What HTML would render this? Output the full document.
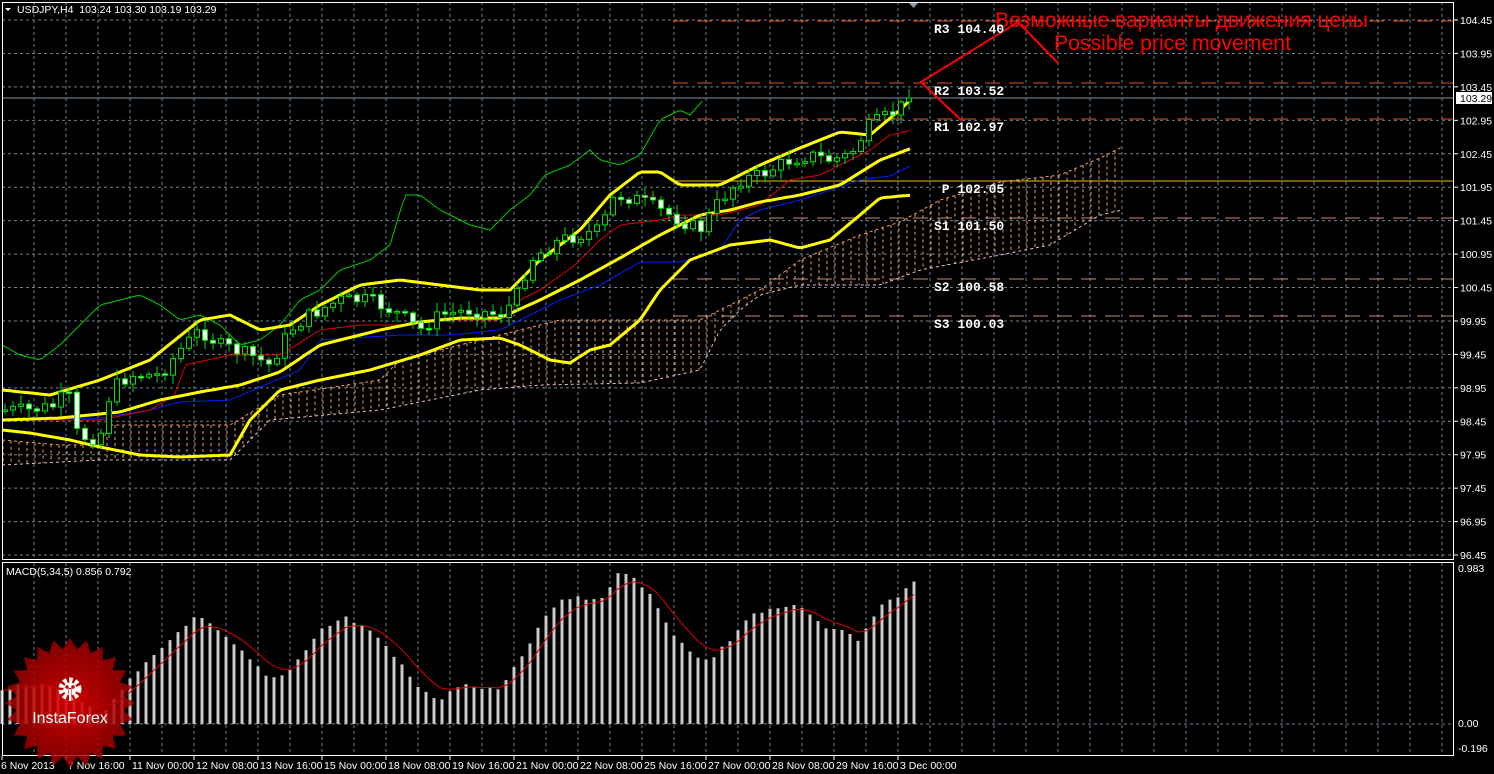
<!DOCTYPE html>
<html><head><meta charset="utf-8"><style>
html,body{margin:0;padding:0;background:#000;width:1494px;height:774px;overflow:hidden}
svg{display:block}
</style></head><body>
<svg id="s" width="1494" height="774" xmlns="http://www.w3.org/2000/svg" font-family="Liberation Sans, DejaVu Sans, sans-serif">
<rect width="1494" height="774" fill="#000"/>
<g id="grid"></g>
<g id="cloud"></g>
<g id="lines"></g>
<g id="cand"></g>
<g id="macd"></g>
<g id="axes"></g>
<g transform="translate(70,703)">
<defs><radialGradient id="lg"><stop offset="0" stop-color="#e00000" stop-opacity="0.9"/><stop offset="1" stop-color="#a00000" stop-opacity="0.8"/></radialGradient></defs>
<polygon id="star" fill="url(#lg)"/>
<g fill="#fff" transform="translate(0,-14)">
<circle r="9" fill="none" stroke="#fff" stroke-width="5" stroke-dasharray="3.5 2.4"/>
<circle r="6.5" fill="#fff"/>
<circle cx="-3" cy="-2" r="1.8" fill="#c00"/><circle cx="3" cy="-2" r="1.8" fill="#c00"/>
<rect x="-1.5" y="-1" width="3" height="12" fill="#c00"/>
<rect x="-1" y="0" width="2" height="12"/>
</g>
<text x="0" y="20" fill="#fff" font-size="16" text-anchor="middle">InstaForex</text>
</g>
<g fill="none" stroke="#f00" stroke-width="2">
<polyline points="1058,63 1018,22 921,82 962,121"/>
</g>
<text x="995" y="27" fill="#f00" font-size="21" textLength="373" lengthAdjust="spacingAndGlyphs">Возможные варианты движения цены</text>
<text x="1054" y="50" fill="#f00" font-size="21" textLength="237" lengthAdjust="spacingAndGlyphs">Possible price movement</text>
<g fill="#fff" font-family="Liberation Mono, monospace" font-weight="bold" font-size="13">
<text x="934" y="33">R3 104.40</text>
<text x="934" y="95">R2 103.52</text>
<text x="934" y="131">R1 102.97</text>
<text x="934" y="193">&#160;P 102.05</text>
<text x="934" y="230">S1 101.50</text>
<text x="934" y="291">S2 100.58</text>
<text x="934" y="328">S3 100.03</text>
</g>
<polygon points="5,8 11,8 8,11" fill="#fff"/>
<text x="17" y="13" fill="#fff" font-size="10.5">USDJPY,H4&#160; 103.24 103.30 103.19 103.29</text>
<polygon points="909,3 918,3 913.5,8" fill="#8a9aaa"/>
<text x="6" y="575" fill="#fff" font-size="10.5">MACD(5,34,5) 0.856 0.792</text>
</svg>
<script>
(function(){
var NS="http://www.w3.org/2000/svg";
function el(p,t,a){var e=document.createElementNS(NS,t);for(var k in a)e.setAttribute(k,a[k]);document.getElementById(p).appendChild(e);return e;}
function interp(k,x){if(x<=k[0][0])return k[0][1];for(var i=1;i<k.length;i++){if(x<=k[i][0]){var a=k[i-1],b=k[i];return a[1]+(b[1]-a[1])*(x-a[0])/(b[0]-a[0]);}}return k[k.length-1][1];}
function poly(p,k,x0,x1,col,w,extra){var pts=[];for(var x=x0;x<=x1;x+=4)pts.push(x+","+interp(k,x).toFixed(1));var a={points:pts.join(" "),fill:"none",stroke:col,"stroke-width":w};for(var q in extra)a[q]=extra[q];el(p,"polyline",a);}
var gc="#6e7f90";
for(var i=0;i<17;i++){var gy=20+i*33.44;el("grid","line",{x1:2,x2:1454,y1:gy,y2:gy,stroke:gc,"stroke-dasharray":"3 3"});}
for(var gx=34;gx<1454;gx+=32){el("grid","line",{x1:gx,x2:gx,y1:2,y2:560,stroke:gc,"stroke-dasharray":"3 3"});el("grid","line",{x1:gx,x2:gx,y1:563,y2:756,stroke:gc,"stroke-dasharray":"3 3"});}
el("grid","line",{x1:2,x2:1454,y1:724,y2:724,stroke:gc,"stroke-dasharray":"3 3"});
var pl=[[21,"#e0501c"],[83,"#e0501c"],[119,"#e0501c"],[218,"#c88a78"],[279,"#c88a78"],[316,"#c88a78"]];
pl.forEach(function(p){el("grid","line",{x1:673,x2:1454,y1:p[0],y2:p[0],stroke:p[1],"stroke-dasharray":"15 9"});});
el("grid","line",{x1:673,x2:1454,y1:181,y2:181,stroke:"#e6c000"});
el("grid","line",{x1:2,x2:1454,y1:98,y2:98,stroke:"#8090a0"});
var cu=[[2,440],[60,445],[100,445],[110,425],[230,425],[280,395],[380,380],[400,360],[500,335],[560,320],[640,320],[700,320],[740,300],[760,290],[800,260],[860,235],[900,222],[940,200],[1000,182],[1060,175],[1100,158],[1122,147]];
var cl=[[2,465],[100,460],[230,460],[270,420],[380,410],[480,390],[540,385],[640,383],[700,370],[720,330],[740,310],[760,295],[800,285],[880,285],[920,270],[1000,255],[1050,245],[1100,215],[1122,210]];
for(var cx=3;cx<=1122;cx+=8){el("cloud","line",{x1:cx,x2:cx,y1:interp(cu,cx),y2:interp(cl,cx),stroke:"#f0a060","stroke-dasharray":"3 3"});}
poly("cloud",cu,2,1122,"#f0a060",1,{"stroke-dasharray":"3 3"});
poly("cloud",cl,2,1122,"#e8c0c8",1,{"stroke-dasharray":"3 3"});
var green=[[2,345],[20,355],[40,360],[60,345],[80,325],[100,305],[120,300],[140,295],[160,305],[180,320],[200,315],[220,325],[240,345],[260,340],[280,325],[300,300],[320,290],[340,270],[370,260],[390,245],[405,195],[420,195],[440,210],[470,225],[490,230],[510,210],[530,195],[545,175],[570,165],[590,150],[600,160],[620,165],[640,155],[660,120],[680,110],[690,115],[705,98]];
poly("lines",green,2,705,"#00d000",1);
var blue=[[2,420],[100,418],[150,410],[180,402],[230,400],[300,370],[320,340],[400,335],[450,335],[500,330],[560,300],[600,285],[640,262],[680,262],[700,257],[720,250],[740,220],[760,210],[800,200],[830,190],[860,180],[890,176],[912,165]];
poly("lines",blue,2,912,"#0020ff",1);
var red=[[2,420],[60,420],[100,420],[150,410],[175,395],[185,365],[230,355],[280,355],[320,330],[360,325],[400,325],[440,320],[500,320],[520,300],[540,290],[575,265],[600,240],[620,225],[660,220],[680,215],[720,215],[760,205],[790,180],[820,175],[850,160],[870,150],[890,135],[912,130]];
poly("lines",red,2,912,"#e00000",1);
var bu=[[2,390],[50,395],[100,380],[150,360],[200,320],[230,315],[260,330],[290,325],[320,305],[360,285],[400,280],[440,285],[480,290],[510,290],[540,260],[580,230],[610,195],[640,172],[660,172],[680,185],[720,185],[760,165],[800,148],[840,132],[870,135],[900,110],[912,98]];
var bm=[[2,420],[60,418],[120,412],[160,400],[200,392],[240,385],[280,372],[320,345],[380,330],[420,322],[460,318],[500,318],[540,300],[580,280],[620,258],[660,235],[700,215],[730,210],[760,202],[800,195],[840,185],[880,160],[912,148]];
var bl=[[2,430],[30,433],[70,440],[100,447],[140,455],[180,457],[230,455],[250,420],[280,390],[320,380],[370,370],[420,355],[460,340],[500,338],[520,345],[550,360],[570,363],[590,350],[610,345],[640,320],[660,290],[690,260],[730,245],[770,240],[800,248],[830,240],[860,215],[880,198],[912,195]];
poly("lines",bu,2,912,"#ffff00",3);poly("lines",bm,2,912,"#ffff00",3);poly("lines",bl,2,912,"#ffff00",3);
var cls=[[2,410],[30,410],[60,405],[66,365],[72,430],[90,440],[105,430],[110,390],[130,375],[160,375],[180,350],[200,330],[220,345],[250,355],[270,365],[290,330],[310,315],[340,300],[370,300],[400,315],[420,330],[440,315],[470,310],[500,315],[515,300],[530,260],[560,240],[580,235],[600,230],[615,195],[640,200],[660,210],[680,220],[700,230],[720,200],[740,180],[760,175],[790,160],[810,155],[830,160],[850,155],[870,125],[890,115],[912,98]];
var seed=7;function rnd(){seed=(seed*9301+49297)%233280;return seed/233280;}
var prev=interp(cls,2);
for(var x=5;x<=912;x+=8){var cc=interp(cls,x)+(rnd()-0.5)*14;if(x>=908)cc=98;var oo=prev;var bt=Math.min(oo,cc),bb=Math.max(oo,cc);if(bb-bt<1.5){bb=bt+1.5;}
var hi=bt-2-rnd()*8,lo=bb+2+rnd()*8;
el("cand","line",{x1:x,x2:x,y1:hi.toFixed(1),y2:lo.toFixed(1),stroke:"#00e000"});
el("cand","rect",{x:x-2.5,y:bt.toFixed(1),width:5,height:(bb-bt).toFixed(1),fill:(cc>oo?"#fff":"#000"),stroke:"#00e000"});prev=cc;}
var mk=[[2,690],[10,687],[50,685],[80,700],[100,715],[115,700],[130,680],[160,650],[190,620],[200,617],[210,625],[240,650],[270,680],[290,670],[320,630],[345,617],[370,630],[390,650],[420,690],[440,700],[460,685],[500,690],[520,660],[540,625],[560,600],[580,598],[600,600],[620,572],[630,572],[650,595],[670,630],[700,660],[710,660],[730,640],[750,615],[780,608],[800,606],[820,625],[840,630],[860,640],[880,605],[900,595],[914,583]];
var sig=[];var sm=null;
for(var mx=2;mx<=914;mx+=8){var v=interp(mk,mx)+(rnd()-0.5)*4;var y0=724;el("macd","rect",{x:mx-1.5,y:Math.min(v,y0).toFixed(1),width:3,height:Math.abs(y0-v).toFixed(1),fill:"#c8c8c8"});sm=(sm===null)?v:sm+(v-sm)*0.33;sig.push(mx+","+sm.toFixed(1));}
el("macd","polyline",{points:sig.join(" "),fill:"none",stroke:"#e00000","stroke-width":1});
var pts=[];for(var si=0;si<48;si++){var r=(si%2==0)?65:54;var an=si*Math.PI/24;pts.push((r*Math.cos(an)).toFixed(1)+","+(r*Math.sin(an)).toFixed(1));}
document.getElementById("star").setAttribute("points",pts.join(" "));
el("axes","rect",{x:2.5,y:2.5,width:1451,height:557,fill:"none",stroke:"#fff"});
el("axes","rect",{x:2.5,y:562.5,width:1451,height:193,fill:"none",stroke:"#fff"});
var pr=["104.45","103.95","103.45","102.95","102.45","101.95","101.45","100.95","100.45","99.95","99.45","98.95","98.45","97.95","97.45","96.95","96.45"];
pr.forEach(function(t,i){var y=20+i*33.44;el("axes","line",{x1:1454,x2:1458,y1:y,y2:y,stroke:"#fff"});var tx=el("axes","text",{x:1460,y:y+4,fill:"#fff","font-size":"10.5"});tx.textContent=t;});
el("axes","rect",{x:1456,y:92,width:36,height:12,fill:"#fff"});
var t1=el("axes","text",{x:1460,y:102,fill:"#000","font-size":"10.5"});t1.textContent="103.29";
[["0.983",572],["0.00",727],["-0.196",752]].forEach(function(a){var tx=el("axes","text",{x:1458,y:a[1],fill:"#fff","font-size":"10.5"});tx.textContent=a[0];});
var tl=["6 Nov 2013","7 Nov 16:00","11 Nov 00:00","12 Nov 08:00","13 Nov 16:00","15 Nov 00:00","18 Nov 08:00","19 Nov 16:00","21 Nov 00:00","22 Nov 08:00","25 Nov 16:00","27 Nov 00:00","28 Nov 08:00","29 Nov 16:00","3 Dec 00:00"];
tl.forEach(function(lbl,i){var x=2+i*64;el("axes","line",{x1:x,x2:x,y1:756,y2:760,stroke:"#fff"});var tx=el("axes","text",{x:x+(i==0?-1:2),y:769,fill:"#fff","font-size":"10.5"});tx.textContent=lbl;});
})();
</script>
</body></html>
